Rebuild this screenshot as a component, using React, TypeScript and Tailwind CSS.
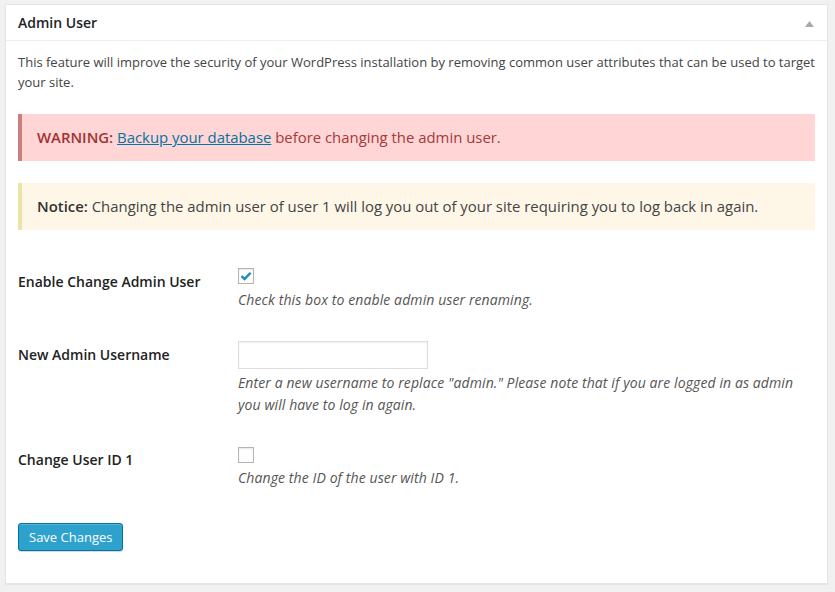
import React from "react";

export default function App() {
  return (
    <div
      className="w-[835px] h-[592px] bg-[#f1f1f1] pt-[4px] pl-[5px] overflow-hidden text-[#444]"
      style={{ fontFamily: '"Open Sans", "Noto Sans", sans-serif' }}
    >
      <div className="w-[823px] h-[580px] bg-white border border-[#e5e5e5] shadow-[0_1px_1px_rgba(0,0,0,0.04)]">
        {/* header */}
        <div className="h-[36px] border-b border-[#eeeeee] flex items-center justify-between pl-[12px] pr-[13px]">
          <h3 className="text-[14px] font-semibold text-[#222] leading-none">Admin User</h3>
          <svg width="9" height="6" viewBox="0 0 9 6" className="mt-[2px]">
            <polygon points="4.5,0 9,6 0,6" fill="#aaaaaa" />
          </svg>
        </div>
        {/* body */}
        <div className="px-[12px] pt-[11px]">
          <p className="text-[13px] leading-[20px] text-[#444] whitespace-nowrap">
            This feature will improve the security of your WordPress installation by removing common user attributes that can be used to target
            <br />
            your site.
          </p>
          <div className="mt-[22px] h-[47px] bg-[#ffd5d5] border-l-4 border-[#cc7f7f] flex items-center pl-[15px] text-[14.9px] text-[#a43a3a]">
            <span>
              <strong className="font-semibold text-[#9e3434]">WARNING:</strong>{" "}
              <a className="underline text-[#0074a2] cursor-pointer">Backup your database</a> before changing the admin user.
            </span>
          </div>
          <div className="mt-[22px] h-[47px] bg-[#fef7e8] border-l-4 border-[#ebe4a6] flex items-center pl-[15px] text-[14.9px] text-[#444]">
            <span>
              <strong className="font-semibold text-[#333]">Notice:</strong> Changing the admin user of user 1 will log you out of your site requiring you to log back in again.
            </span>
          </div>

          <div className="mt-[23px]">
            {/* row 1 */}
            <div className="flex">
              <div className="w-[220px] pt-[20px] pb-[20px] text-[14px] leading-[18px] font-semibold text-[#222]">
                Enable Change Admin User
              </div>
              <div className="py-[15px]">
                <div className="w-[16px] h-[16px] border border-[#b4b4b4] shadow-[inset_0_1px_2px_rgba(0,0,0,0.1)] flex items-center justify-center">
                  <svg width="12" height="10" viewBox="0 0 12 10">
                    <path d="M1.5 5.2 L4.5 8 L10.5 1.8" fill="none" stroke="#1e8cbe" strokeWidth="2.4" strokeLinejoin="miter" />
                  </svg>
                </div>
                <p className="mt-[5px] text-[14px] leading-[22px] tracking-[0.1px] italic text-[#555]">
                  Check this box to enable admin user renaming.
                </p>
              </div>
            </div>
            {/* row 2 */}
            <div className="flex">
              <div className="w-[220px] pt-[20px] pb-[20px] text-[14px] leading-[18px] font-semibold text-[#222]">
                New Admin Username
              </div>
              <div className="py-[15px]">
                <input
                  type="text"
                  className="block w-[190px] h-[28px] border border-[#dddddd] shadow-[inset_0_1px_2px_rgba(0,0,0,0.07)] outline-none"
                />
                <p className="mt-[3px] text-[14px] leading-[22px] tracking-[0.1px] italic text-[#555]">
                  Enter a new username to replace "admin." Please note that if you are logged in as admin
                  <br />
                  you will have to log in again.
                </p>
              </div>
            </div>
            {/* row 3 */}
            <div className="flex">
              <div className="w-[220px] pt-[20px] pb-[20px] text-[14px] leading-[18px] font-semibold text-[#222]">
                Change User ID 1
              </div>
              <div className="py-[15px]">
                <div className="mt-[1px] w-[16px] h-[16px] border border-[#b4b4b4] shadow-[inset_0_1px_2px_rgba(0,0,0,0.1)]" />
                <p className="mt-[4px] text-[14px] leading-[22px] tracking-[0.1px] italic text-[#555]">
                  Change the ID of the user with ID 1.
                </p>
              </div>
            </div>
          </div>

          <button className="mt-[19px] h-[28px] px-[10px] rounded-[3px] bg-[#2ea2cc] border border-[#0074a2] text-white text-[13px] leading-[26px] shadow-[inset_0_1px_0_rgba(120,200,230,0.5),0_1px_0_rgba(0,0,0,0.15)]">
            Save Changes
          </button>
        </div>
      </div>
    </div>
  );
}
